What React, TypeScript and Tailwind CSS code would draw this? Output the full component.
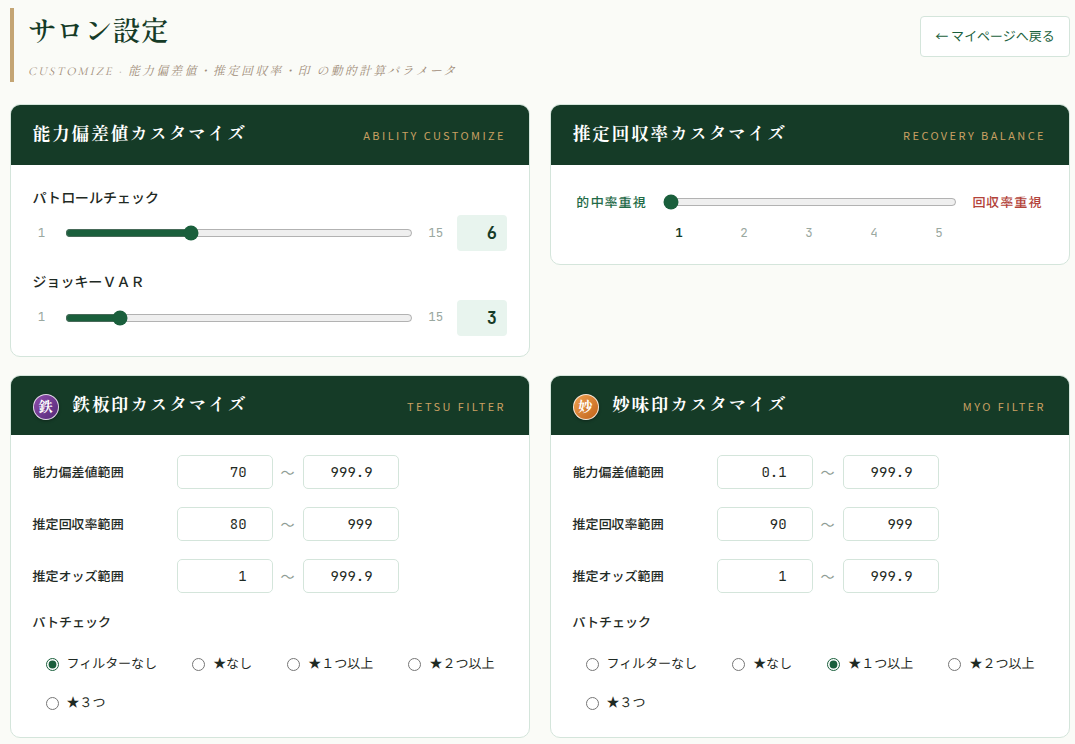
import clsx from 'clsx';
import { useState, type ReactNode } from 'react';

const PATROL_OPTIONS = ['フィルターなし', '★なし', '★１つ以上', '★２つ以上', '★３つ'];
const BALANCE_STEPS = [1, 2, 3, 4, 5];

type Ranges = { label: string; min: string; max: string }[];

type CardProps = {
  title: string;
  sub: string;
  badge?: ReactNode;
  children: ReactNode;
};

function Card({ title, sub, badge, children }: CardProps) {
  return (
    <section className="overflow-hidden rounded-[10px] border border-[#d4e5db] bg-white">
      <div
        className={clsx(
          'flex items-center justify-between bg-[#153b27] pr-[23px] pl-[21.6px]',
          badge ? 'h-[59px]' : 'h-[60px] pb-[2px]',
        )}
      >
        <div className="flex items-center gap-[13.4px]">
          {badge}
          <h2 className="pb-[5px] font-['Shippori_Mincho','Noto_Serif_CJK_JP','Noto_Sans_CJK_JP',serif] text-[18px] leading-6 font-bold tracking-[1.44px] text-white">
            {title}
          </h2>
        </div>
        <span className="pt-[2px] text-[11px] tracking-[2.42px] text-[#c9a063]">{sub}</span>
      </div>
      {children}
    </section>
  );
}

function SealBadge({ char, className }: { char: string; className: string }) {
  return (
    <span
      className={clsx(
        "mt-[2px] flex size-[26px] items-center justify-center rounded-full border-[1.5px] border-white/80 pb-px font-['Shippori_Mincho','Noto_Serif_CJK_JP','Noto_Sans_CJK_JP',serif] text-[14.5px] leading-none font-extrabold text-white shadow-[0_1px_3px_rgba(0,0,0,0.35)]",
        className,
      )}
    >
      {char}
    </span>
  );
}

function AbilitySlider({ label, initial }: { label: string; initial: number }) {
  const [value, setValue] = useState(initial);

  return (
    <div>
      <div className="h-[21px] text-[14px] leading-[21px] font-medium">{label}</div>
      <div className="mt-[7.4px] flex h-9 items-center">
        <span className="w-[18px] text-center font-['JetBrains_Mono','Liberation_Mono',monospace] text-[12.5px] text-[#9aa8a0]">
          1
        </span>
        <input
          type="range"
          min={1}
          max={15}
          value={value}
          onChange={(e) => setValue(Number(e.target.value))}
          className="mr-[14px] ml-[14.2px] h-4 w-[348px] accent-[#1a5f3c]"
        />
        <span className="w-[18px] text-center font-['JetBrains_Mono','Liberation_Mono',monospace] text-[12.5px] text-[#9aa8a0]">
          15
        </span>
        <span className="ml-[12.2px] h-9 w-[50px] rounded bg-[#e8f4ee] pr-[10px] text-right font-['JetBrains_Mono','Liberation_Mono',monospace] text-[17px] leading-9 font-bold text-[#163b27]">
          {value}
        </span>
      </div>
    </div>
  );
}

function RangeInput({ value }: { value: string }) {
  return (
    <input
      type="number"
      defaultValue={value}
      className="h-[34px] w-24 rounded-[5px] border border-[#d4e5db] bg-white px-[10.4px] text-right font-['JetBrains_Mono','Liberation_Mono',monospace] text-[14px]"
    />
  );
}

function FilterBody({ name, ranges, initial }: { name: string; ranges: Ranges; initial: number }) {
  const [selected, setSelected] = useState(initial);

  return (
    <div className="h-[302px] px-[21.6px] pt-5">
      <div className="space-y-[18px]">
        {ranges.map((r) => (
          <div key={r.label} className="flex h-[34px] items-center">
            <span className="w-[144.4px] text-[13px] font-medium">{r.label}</span>
            <RangeInput value={r.min} />
            <span className="w-[30px] pr-px text-center text-[14px] text-[#8f9d95]">〜</span>
            <RangeInput value={r.max} />
          </div>
        ))}
      </div>
      <div className="mt-[19px] text-[13px] leading-5 font-medium">パトチェック</div>
      <div className="mt-[21px] flex flex-wrap gap-x-[35px] gap-y-[19px] pl-[13px]">
        {PATROL_OPTIONS.map((option, i) => (
          <label key={option} className="flex h-5 items-center gap-2 text-[13px] leading-5">
            <input
              type="radio"
              name={name}
              checked={selected === i}
              onChange={() => setSelected(i)}
              className="mt-[2px] size-[13px] accent-[#1a5f3c]"
            />
            {option}
          </label>
        ))}
      </div>
    </div>
  );
}

export default function App() {
  const [balance, setBalance] = useState(1);

  return (
    <div className="h-[744px] w-[1075px] overflow-hidden bg-[#fafbf7] pt-2 pr-[5px] pl-[10px] font-['Noto_Sans_JP','Noto_Sans_CJK_JP',sans-serif] text-[#1f2a24]">
      <header className="flex h-[74px] justify-between">
        <div className="border-l-4 border-[#c4a574] pl-[14px]">
          <h1 className="h-[44px] font-['Shippori_Mincho','Noto_Serif_CJK_JP','Noto_Sans_CJK_JP',serif] text-[28px] leading-[42px] font-semibold tracking-[0.2px] text-[#163b27]">
            サロン設定
          </h1>
          <p className="mt-[9px] font-['Cormorant_SC','Shippori_Mincho','Noto_Serif_CJK_JP','Noto_Sans_CJK_JP',serif] text-[12px] leading-[20px] tracking-[2.13px] whitespace-nowrap text-[#a08c78] italic">
            CUSTOMIZE · 能力偏差値・推定回収率・印 の動的計算パラメータ
          </p>
        </div>
        <button className="mt-2 h-[41px] w-[150px] rounded border border-[#d4e5db] bg-white pb-[2px] text-[13px] whitespace-nowrap text-[#1a5f3c]">
          ← マイページへ戻る
        </button>
      </header>

      <main className="mt-[22px] grid grid-cols-2 items-start gap-x-5 gap-y-[18px]">
        <Card title="能力偏差値カスタマイズ" sub="ABILITY CUSTOMIZE">
          <div className="h-[191px] space-y-[19.8px] px-[21.6px] pt-[22px]">
            <AbilitySlider label="パトロールチェック" initial={6} />
            <AbilitySlider label="ジョッキーＶＡＲ" initial={3} />
          </div>
        </Card>

        <Card title="推定回収率カスタマイズ" sub="RECOVERY BALANCE">
          <div className="h-[99px] px-[21.6px] pt-[26px]">
            <div className="flex h-[22px] items-center px-1 text-[13px] font-medium tracking-[1px]">
              <span className="w-[70px] whitespace-nowrap text-[#1f6b47]">的中率重視</span>
              <input
                type="range"
                min={1}
                max={5}
                value={balance}
                onChange={(e) => setBalance(Number(e.target.value))}
                className="mr-[15.6px] ml-4 h-4 w-[294px] accent-[#1a5f3c]"
              />
              <span className="w-[70px] whitespace-nowrap text-[#b3433a]">回収率重視</span>
            </div>
            <div className="mt-[10px] ml-[74px] flex">
              {BALANCE_STEPS.map((n) => (
                <span
                  key={n}
                  className={clsx(
                    "w-[65px] text-center font-['JetBrains_Mono','Liberation_Mono',monospace] text-[12.5px] leading-5",
                    n === balance ? 'font-bold text-[#163b27]' : 'text-[#9aa8a0]',
                  )}
                >
                  {n}
                </span>
              ))}
            </div>
          </div>
        </Card>

        <Card
          title="鉄板印カスタマイズ"
          sub="TETSU FILTER"
          badge={
            <SealBadge
              char="鉄"
              className="bg-[linear-gradient(135deg,#8e4dac,#552a78)]"
            />
          }
        >
          <FilterBody
            name="tetsu"
            initial={0}
            ranges={[
              { label: '能力偏差値範囲', min: '70', max: '999.9' },
              { label: '推定回収率範囲', min: '80', max: '999' },
              { label: '推定オッズ範囲', min: '1', max: '999.9' },
            ]}
          />
        </Card>

        <Card
          title="妙味印カスタマイズ"
          sub="MYO FILTER"
          badge={
            <SealBadge
              char="妙"
              className="bg-[linear-gradient(135deg,#f0a050,#c0631a)]"
            />
          }
        >
          <FilterBody
            name="myo"
            initial={2}
            ranges={[
              { label: '能力偏差値範囲', min: '0.1', max: '999.9' },
              { label: '推定回収率範囲', min: '90', max: '999' },
              { label: '推定オッズ範囲', min: '1', max: '999.9' },
            ]}
          />
        </Card>
      </main>
    </div>
  );
}
